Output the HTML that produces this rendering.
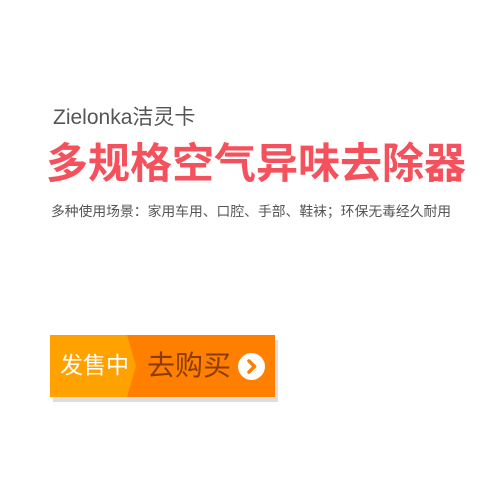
<!DOCTYPE html>
<html><head><meta charset="utf-8"><style>
body{margin:0;width:495px;height:502px;background:#fff;position:relative;overflow:hidden;font-family:"Liberation Sans","Noto Sans CJK SC",sans-serif}
.t1{position:absolute;left:53px;top:101px;font-size:21px;color:#555;white-space:nowrap}
.t2{position:absolute;left:46px;top:137px;font-size:42px;font-weight:bold;color:#f5515c;white-space:nowrap;line-height:54px;letter-spacing:0px}
.t3{position:absolute;left:51px;top:203px;font-size:13.8px;color:#555;white-space:nowrap;line-height:18px}
.sh{position:absolute;left:53px;top:340px;width:225px;height:62px;background:#ddd}
.btn{position:absolute;left:50px;top:335px;width:225px;height:62px;background:#ff7f00;overflow:hidden}
.l{position:absolute;left:0;top:0;width:86px;height:62px;background:#ffa200;clip-path:polygon(0 0,77px 0,86px 31px,77px 62px,0 62px)}
.lt{position:absolute;left:10px;top:15px;font-size:23px;color:#fff;line-height:30px}
.rt{position:absolute;left:97px;top:14px;font-size:28px;color:#8a3c00;line-height:34px}
.c{position:absolute;left:188px;top:18px;width:27px;height:27px;border-radius:50%;background:#fff}
</style></head><body>
<div class="t1">Zielonka洁灵卡</div>
<div class="t2">多规格空气异味去除器</div>
<div class="t3">多种使用场景：家用车用、口腔、手部、鞋袜；环保无毒经久耐用</div>
<div class="sh"></div>
<div class="btn"><div class="l"></div><div class="lt">发售中</div><div class="rt">去购买</div>
<div class="c"><svg width="27" height="27" viewBox="0 0 27 27"><path d="M11 8 L16.5 13.5 L11 19" fill="none" stroke="#ff7f00" stroke-width="3.5" stroke-linecap="round" stroke-linejoin="round"/></svg></div></div>
</body></html>
